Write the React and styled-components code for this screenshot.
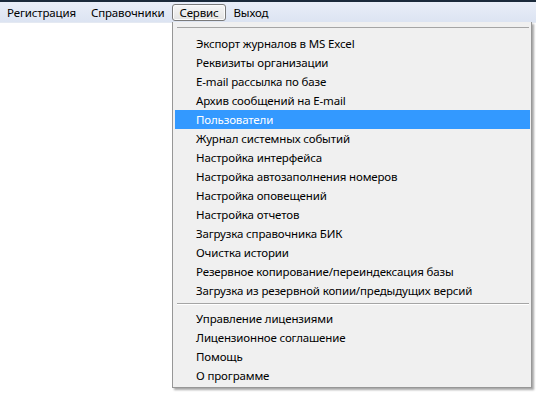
import { styled, createGlobalStyle } from 'styled-components';

const Global = createGlobalStyle`
  html, body { margin: 0; padding: 0; background: #fff; }
  body {
    width: 536px;
    height: 393px;
    overflow: hidden;
    font-family: "Noto Sans", "DejaVu Sans", sans-serif;
    font-size: 11.5px;
    letter-spacing: -0.15px;
  }
`

const Screen = styled.div`
  position: relative;
  width: 536px;
  height: 393px;
  background: #fff;
`

const TopEdge = styled.div`
  height: 2px;
  background: #1b2a3b;
`

const MenuBar = styled.div`
  display: flex;
  align-items: center;
  height: 20px;
  padding-left: 0;
  background: linear-gradient(#e9eef8, #dce4f2);
  border-bottom: 1px solid #e4e9f2;
`

const BarItem = styled.div`
  height: 17px;
  line-height: 16px;
  padding: 0 6px;
  margin-right: 1px;
  color: #000;
  box-sizing: border-box;
  border: 1px solid ${({ $open }) => ($open ? '#7a7a7a' : 'transparent')};
  border-radius: 3px;
  background: ${({ $open }) => ($open ? 'linear-gradient(#f6f6f6, #e3e3e3)' : 'transparent')};
  box-shadow: ${({ $open }) => ($open ? 'inset 0 0 0 1px #fcfcfc' : 'none')};
`

const Dropdown = styled.div`
  position: absolute;
  left: 172px;
  top: 22px;
  width: 360px;
  height: 366px;
  box-sizing: border-box;
  background: #f0f0f0;
  border: 1px solid #979797;
  border-top: none;
  box-shadow: 2px 2px 2px rgba(0, 0, 0, 0.35);
  padding: 5px 1px 0 2px;
`

const TopRule = styled.div`
  height: 1px;
  margin: 0 1px 6px 2px;
  background: #a5a5a5;
`

const Item = styled.div`
  height: 19px;
  line-height: 19px;
  padding-left: 21px;
  color: ${({ $active }) => ($active ? '#fff' : '#000')};
  background: ${({ $active }) => ($active ? '#3399ff' : 'transparent')};
  white-space: nowrap;
`

const Separator = styled.div`
  height: 1px;
  margin: 3px 1px 5px 2px;
  background: #a5a5a5;
  box-shadow: 0 1px 0 #fff;
`

const groupA = [
  'Экспорт журналов в MS Excel',
  'Реквизиты организации',
  'E-mail рассылка по базе',
  'Архив сообщений на E-mail',
  'Пользователи',
  'Журнал системных событий',
  'Настройка интерфейса',
  'Настройка автозаполнения номеров',
  'Настройка оповещений',
  'Настройка отчетов',
  'Загрузка справочника БИК',
  'Очистка истории',
  'Резервное копирование/переиндексация базы',
  'Загрузка из резервной копии/предыдущих версий',
]

const groupB = [
  'Управление лицензиями',
  'Лицензионное соглашение',
  'Помощь',
  'О программе',
]

export default function App() {
  return (
    <Screen>
      <Global />
      <TopEdge />
      <MenuBar>
        <BarItem>Регистрация</BarItem>
        <BarItem>Справочники</BarItem>
        <BarItem $open>Сервис</BarItem>
        <BarItem>Выход</BarItem>
      </MenuBar>
      <Dropdown>
        <TopRule />
        {groupA.map((t) => (
          <Item key={t} $active={t === 'Пользователи'}>{t}</Item>
        ))}
        <Separator />
        {groupB.map((t) => (
          <Item key={t}>{t}</Item>
        ))}
      </Dropdown>
    </Screen>
  );
}
